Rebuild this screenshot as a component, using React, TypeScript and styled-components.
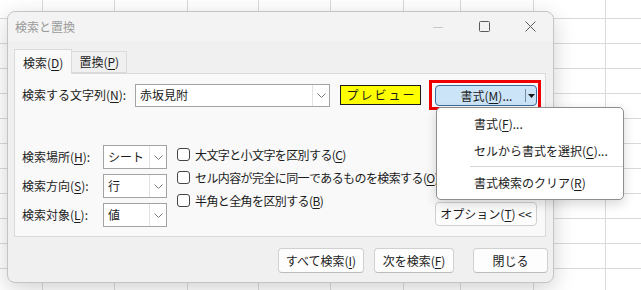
import { createGlobalStyle, styled } from "styled-components";

const COLUMN_WIDTHS = [43, 72, 73, 71, 72, 73, 57, 73, 72, 70];

export default function App() {
  return (
    <>
      <GlobalStyle />
      <Sheet>
        {/* ワークシートの列 */}
        {COLUMN_WIDTHS.map((w, i) => (
          <Column key={i} $w={w} />
        ))}

        {/* 検索と置換ダイアログ */}
        <Dialog>
          <TitleBar>
            <Title>検索と置換</Title>
            <WindowButtons>
              <WindowButton>
                <svg width="10" height="10" viewBox="0 0 10 10">
                  <line x1="0" y1="5.5" x2="10" y2="5.5" stroke="#c9c9c9" strokeWidth="1" />
                </svg>
              </WindowButton>
              <WindowButton>
                <svg width="11" height="11" viewBox="0 0 11 11">
                  <rect x="0.5" y="0.5" width="10" height="10" rx="1" fill="none" stroke="#5a5a5a" strokeWidth="1" />
                </svg>
              </WindowButton>
              <WindowButton>
                <svg width="11" height="11" viewBox="0 0 11 11">
                  <path d="M0.5 0.5 L10.5 10.5 M10.5 0.5 L0.5 10.5" stroke="#5a5a5a" strokeWidth="1" />
                </svg>
              </WindowButton>
            </WindowButtons>
          </TitleBar>

          <Body>
            {/* タブ */}
            <Tabs>
              <Tab $active>
                検索(<u>D</u>)
              </Tab>
              <Tab>
                置換(<u>P</u>)
              </Tab>
            </Tabs>

            <Panel>
              {/* 検索する文字列 */}
              <SearchRow>
                <SearchLabel>
                  検索する文字列(<u>N</u>):
                </SearchLabel>
                <Combo $w={195} $h={23}>
                  <ComboText>赤坂見附</ComboText>
                  <ComboArrow>
                    <Chevron />
                  </ComboArrow>
                </Combo>
                <Preview>プレビュー</Preview>
                <Highlight>
                  <SplitButton>
                    <SplitMain>
                      書式(<u>M</u>)...
                    </SplitMain>
                    <SplitDivider />
                    <SplitArrow>
                      <svg width="7" height="4" viewBox="0 0 7 4">
                        <path d="M0 0 H7 L3.5 4 Z" fill="#1b1b1b" />
                      </svg>
                    </SplitArrow>
                  </SplitButton>

                  {/* 書式メニュー */}
                  <Menu>
                    <MenuItem>
                      書式(<u>F</u>)...
                    </MenuItem>
                    <MenuItem>
                      セルから書式を選択(<u>C</u>)...
                    </MenuItem>
                    <MenuSeparator />
                    <MenuItem>
                      書式検索のクリア(<u>R</u>)
                    </MenuItem>
                  </Menu>
                </Highlight>
              </SearchRow>

              {/* オプション */}
              <OptionsRow>
                <OptionGrid>
                  <OptionLabel>
                    検索場所(<u>H</u>):
                  </OptionLabel>
                  <Combo $w={64} $h={24}>
                    <ComboText>シート</ComboText>
                    <ComboArrow>
                      <Chevron />
                    </ComboArrow>
                  </Combo>
                  <OptionLabel>
                    検索方向(<u>S</u>):
                  </OptionLabel>
                  <Combo $w={64} $h={24}>
                    <ComboText>行</ComboText>
                    <ComboArrow>
                      <Chevron />
                    </ComboArrow>
                  </Combo>
                  <OptionLabel>
                    検索対象(<u>L</u>):
                  </OptionLabel>
                  <Combo $w={64} $h={24}>
                    <ComboText>値</ComboText>
                    <ComboArrow>
                      <Chevron />
                    </ComboArrow>
                  </Combo>
                </OptionGrid>

                <CheckList>
                  <CheckRow>
                    <CheckBox />
                    大文字と小文字を区別する(<u>C</u>)
                  </CheckRow>
                  <CheckRow>
                    <CheckBox />
                    セル内容が完全に同一であるものを検索する(<u>O</u>)
                  </CheckRow>
                  <CheckRow>
                    <CheckBox />
                    半角と全角を区別する(<u>B</u>)
                  </CheckRow>
                </CheckList>

                <OptionsButton>
                  オプション(<u>T</u>) &lt;&lt;
                </OptionsButton>
              </OptionsRow>
            </Panel>

            {/* 下部ボタン */}
            <Footer>
              <FooterButton $w={86}>
                すべて検索(<u>I</u>)
              </FooterButton>
              <FooterButton $w={80}>
                次を検索(<u>F</u>)
              </FooterButton>
              <FooterButton $w={75} $gap={19}>
                閉じる
              </FooterButton>
            </Footer>
          </Body>
        </Dialog>
      </Sheet>
    </>
  );
}

function Chevron() {
  return (
    <svg width="9" height="5" viewBox="0 0 9 5">
      <path d="M0.5 0.5 L4.5 4.5 L8.5 0.5" fill="none" stroke="#7a7a7a" strokeWidth="1" />
    </svg>
  );
}

const GlobalStyle = createGlobalStyle`
  html, body {
    margin: 0;
    padding: 0;
    background: #fff;
  }
  body {
    font-family: "Noto Sans CJK JP", "Noto Sans", sans-serif;
    font-size: 12px;
    color: #1b1b1b;
  }
  u {
    text-decoration-thickness: 1px;
    text-underline-offset: 2px;
  }
`;

const Sheet = styled.div`
  position: relative;
  display: flex;
  width: 641px;
  height: 290px;
  overflow: hidden;
  background-image: linear-gradient(to bottom, #dadada 0 1px, transparent 1px);
  background-size: 100% 25px;
  background-position: 0 18px;
`;

const Column = styled.div<{ $w: number }>`
  flex: none;
  box-sizing: border-box;
  width: ${(p) => p.$w}px;
  height: 100%;
  border-right: 1px solid #dadada;
`;

const Dialog = styled.div`
  position: absolute;
  left: 7px;
  top: 11px;
  width: 547px;
  height: 272px;
  box-sizing: border-box;
  display: flex;
  flex-direction: column;
  background: #f0f0f0;
  border: 1px solid #c4c4c4;
  border-radius: 8px;
  box-shadow: 0 6px 22px rgba(0, 0, 0, 0.18);
`;

const TitleBar = styled.div`
  display: flex;
  align-items: center;
  height: 29px;
  padding-left: 7px;
  background: #f3f3f3;
  border-radius: 8px 8px 0 0;
`;

const Title = styled.div`
  flex: 1;
  color: #9b9b9b;
  line-height: 1;
`;

const WindowButtons = styled.div`
  display: flex;
  height: 100%;
`;

const WindowButton = styled.div`
  display: flex;
  align-items: center;
  justify-content: center;
  width: 46px;
  height: 100%;
`;

const Body = styled.div`
  display: flex;
  flex-direction: column;
  padding: 8px 7px 0 6px;
`;

const Tabs = styled.div`
  display: flex;
  align-items: flex-end;
  height: 24px;
`;

const Tab = styled.div<{ $active?: boolean }>`
  display: flex;
  align-items: center;
  box-sizing: border-box;
  height: ${(p) => (p.$active ? "25px" : "22px")};
  padding: ${(p) => (p.$active ? "2px 8px 0" : "0 7px")};
  margin-bottom: ${(p) => (p.$active ? "-1px" : "0")};
  background: ${(p) => (p.$active ? "#f9f9f9" : "#f0f0f0")};
  border: 1px solid #dadada;
  border-bottom: ${(p) => (p.$active ? "none" : "1px solid #dadada")};
  border-left: ${(p) => (p.$active ? "1px solid #dadada" : "none")};
  position: relative;
  z-index: ${(p) => (p.$active ? 1 : 0)};
  line-height: 1;
`;

const Panel = styled.div`
  display: flex;
  flex-direction: column;
  box-sizing: border-box;
  height: 164px;
  padding: 6px 3px 0 7px;
  background: #f9f9f9;
  border: 1px solid #dadada;
`;

const SearchRow = styled.div`
  display: flex;
  align-items: center;
  height: 30px;
`;

const SearchLabel = styled.div`
  width: 113px;
  line-height: 1;
`;

const Combo = styled.div<{ $w: number; $h: number }>`
  display: flex;
  box-sizing: border-box;
  width: ${(p) => p.$w}px;
  height: ${(p) => p.$h}px;
  background: #fff;
  border: 1px solid #a3a3a3;
`;

const ComboText = styled.div`
  flex: 1;
  display: flex;
  align-items: center;
  padding-left: 4px;
  line-height: 1;
`;

const ComboArrow = styled.div`
  display: flex;
  align-items: center;
  justify-content: center;
  width: 16px;
  border-left: 1px solid #e3e3e3;
`;

const Preview = styled.div`
  display: flex;
  align-items: center;
  justify-content: center;
  box-sizing: border-box;
  width: 81px;
  height: 20px;
  margin-left: 10px;
  padding-left: 2px;
  background: #ffff00;
  border: 1px solid #1b1b1b;
  letter-spacing: 2px;
  line-height: 1;
`;

const Highlight = styled.div`
  position: relative;
  box-sizing: border-box;
  width: 112px;
  height: 30px;
  margin-left: 8px;
  padding: 2px 1px 1px 3px;
  border: 3px solid #ee0000;
`;

const SplitButton = styled.div`
  display: flex;
  align-items: center;
  box-sizing: border-box;
  width: 102px;
  height: 21px;
  background: #cce4f7;
  border: 1px solid #3b6e9e;
  border-radius: 4px;
`;

const SplitMain = styled.div`
  flex: 1;
  text-align: center;
  padding-left: 12px;
  line-height: 1;
`;

const SplitDivider = styled.div`
  width: 1px;
  height: 13px;
  background: #7a8a99;
`;

const SplitArrow = styled.div`
  display: flex;
  align-items: center;
  justify-content: center;
  width: 10px;
`;

const Menu = styled.div`
  position: absolute;
  left: 4px;
  top: 24px;
  z-index: 5;
  box-sizing: border-box;
  width: 188px;
  padding: 2px 0 3px;
  background: #fff;
  border: 1px solid #8e8e8e;
  border-radius: 5px;
  box-shadow: 0 4px 12px rgba(0, 0, 0, 0.16);
`;

const MenuItem = styled.div`
  display: flex;
  align-items: center;
  height: 27px;
  padding-left: 37px;
  white-space: nowrap;
  line-height: 1;
`;

const MenuSeparator = styled.div`
  height: 1px;
  margin: 2px 0 2px 33px;
  background: #d6d6d6;
`;

const OptionsRow = styled.div`
  display: flex;
  margin-top: 35px;
`;

const OptionGrid = styled.div`
  flex: none;
  display: grid;
  grid-template-columns: 81px 64px;
  grid-auto-rows: 24px;
  row-gap: 5px;
  align-items: center;
`;

const OptionLabel = styled.div`
  line-height: 1;
`;

const CheckList = styled.div`
  flex: 1;
  min-width: 0;
  display: flex;
  flex-direction: column;
  margin: -2px 0 0 10px;
`;

const CheckRow = styled.div`
  display: flex;
  align-items: center;
  height: 23px;
  white-space: nowrap;
  letter-spacing: -0.6px;
  line-height: 1;
`;

const CheckBox = styled.span`
  flex: none;
  box-sizing: border-box;
  width: 13px;
  height: 13px;
  margin-right: 5px;
  background: #fff;
  border: 1px solid #444;
  border-radius: 3px;
`;

const OptionsButton = styled.div`
  flex: none;
  display: flex;
  align-items: center;
  justify-content: center;
  box-sizing: border-box;
  align-self: flex-end;
  width: 102px;
  height: 24px;
  margin: 0 5px 1px 0;
  white-space: nowrap;
  background: #fdfdfd;
  border: 1px solid #d0d0d0;
  border-radius: 4px;
  line-height: 1;
`;

const Footer = styled.div`
  display: flex;
  justify-content: flex-end;
  margin: 11px -2px 0 0;
`;

const FooterButton = styled.div<{ $w: number; $gap?: number }>`
  display: flex;
  align-items: center;
  justify-content: center;
  box-sizing: border-box;
  width: ${(p) => p.$w}px;
  height: 25px;
  margin-left: ${(p) => p.$gap ?? 10}px;
  background: #fdfdfd;
  border: 1px solid #d0d0d0;
  border-bottom-color: #bcbcbc;
  border-radius: 4px;
  line-height: 1;
`;
